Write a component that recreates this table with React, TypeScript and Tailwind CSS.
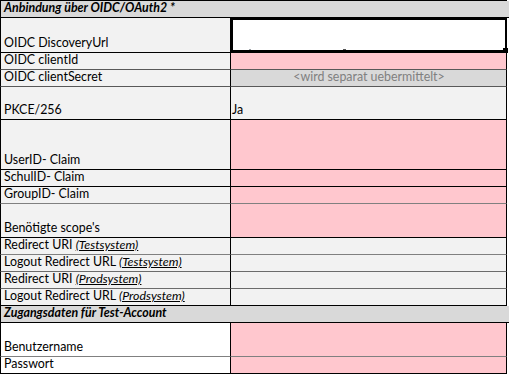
import * as React from "react";

type Row = {
  label: React.ReactNode;
  h: string;
  line: string;
  left?: string;
  right?: React.ReactNode;
  rightBg?: string;
  header?: boolean;
};

const em = (s: string) => <span className="italic underline">{s}</span>;

const rows: Row[] = [
  { label: "Anbindung über OIDC/OAuth2 *", h: "h-[17px]", line: "border-black", header: true },
  { label: "OIDC DiscoveryUrl", h: "h-[35px]", line: "border-black", rightBg: "selected" },
  { label: "OIDC clientId", h: "h-[17px]", line: "border-[#595959]", rightBg: "bg-[#ffc7ce]" },
  {
    label: "OIDC clientSecret",
    h: "h-[17px]",
    line: "border-[#595959]",
    rightBg: "bg-[#d9d9d9] justify-center text-[#808080]",
    right: "<wird separat uebermittelt>",
  },
  { label: "PKCE/256", h: "h-[33px]", line: "border-black", rightBg: "bg-[#f2f2f2]", right: "Ja" },
  { label: "UserID- Claim", h: "h-[50px]", line: "border-black", rightBg: "bg-[#ffc7ce]" },
  { label: "SchulID- Claim", h: "h-[17px]", line: "border-black", rightBg: "bg-[#ffc7ce]" },
  { label: "GroupID- Claim", h: "h-[17px]", line: "border-[#808080]", rightBg: "bg-[#ffc7ce]" },
  { label: "Benötigte scope's", h: "h-[34px]", line: "border-black", rightBg: "bg-[#ffc7ce]" },
  { label: <>Redirect URI {em("(Testsystem)")}</>, h: "h-[17px]", line: "border-[#808080]", rightBg: "bg-[#f2f2f2]" },
  { label: <>Logout Redirect URL {em("(Testsystem)")}</>, h: "h-[17px]", line: "border-[#6b6b6b]", rightBg: "bg-[#f2f2f2]" },
  { label: <>Redirect URI {em("(Prodsystem)")}</>, h: "h-[17px]", line: "border-[#6b6b6b]", rightBg: "bg-[#f2f2f2]" },
  { label: <>Logout Redirect URL {em("(Prodsystem)")}</>, h: "h-[17px]", line: "border-black", rightBg: "bg-[#f2f2f2]" },
  { label: "Zugangsdaten für Test-Account", h: "h-[17px]", line: "border-black", header: true },
  { label: "Benutzername", h: "h-[34px]", line: "border-[#808080]", left: "bg-white", rightBg: "bg-[#ffc7ce]" },
  { label: "Passwort", h: "h-[17px]", line: "border-black", left: "bg-white", rightBg: "bg-[#ffc7ce]" },
];

export default function App() {
  return (
    <div
      className="flex h-[375px] w-[509px] flex-col overflow-hidden bg-white text-[12.4px] leading-[14px] text-black"
      style={{ fontFamily: "Lato, 'Liberation Sans', sans-serif" }}
    >
      <div className="h-px w-[507px] shrink-0 bg-black" />
      {rows.map((r, i) =>
        r.header ? (
          <div
            key={i}
            className={`flex shrink-0 items-end border-b border-l bg-[#d9d9d9] pb-[2px] pl-[3px] font-bold italic ${r.h} ${r.line}`}
          >
            {r.label}
          </div>
        ) : (
          <div key={i} className={`flex shrink-0 ${r.h}`}>
            <div
              className={`flex w-[231px] shrink-0 items-end border-b border-l border-r border-l-black border-r-black pb-[2px] pl-[3px] ${r.line} ${r.left ?? "bg-[#f2f2f2]"}`}
            >
              <span className="whitespace-nowrap">{r.label}</span>
            </div>
            {r.rightBg === "selected" ? (
              <div className="relative flex w-[276px] shrink-0 border-b border-black">
                <div className="relative flex-1 border-2 border-black bg-white">
                  <span className="absolute bottom-0 left-[16px] h-px w-[2px] bg-[#9aa0a6]" />
                  <span className="absolute bottom-0 left-[110px] h-px w-[3px] bg-[#555]" />
                  <span className="absolute -bottom-[3px] -right-[3px] h-[5px] w-[5px] bg-black" />
                </div>
              </div>
            ) : (
              <div
                className={`flex w-[276px] shrink-0 items-end border-b border-r border-r-black pb-[2px] pl-[1px] ${r.line} ${r.rightBg}`}
              >
                {r.right}
              </div>
            )}
          </div>
        ),
      )}
    </div>
  );
}
